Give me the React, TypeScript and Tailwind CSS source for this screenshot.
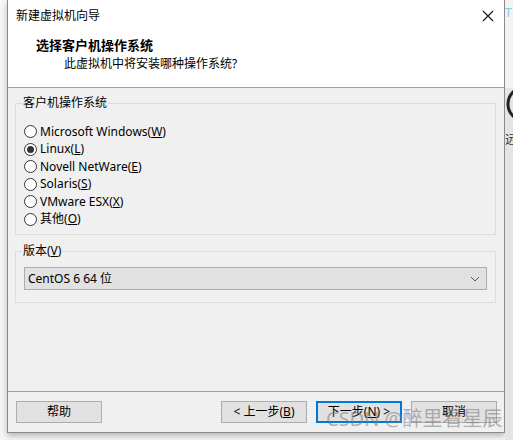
import React from "react";

const font = { fontFamily: '"Noto Sans", "Noto Sans CJK SC", sans-serif' };

const Radio = ({ checked, label, hot, rest = ")" }: { checked?: boolean; label: string; hot: string; rest?: string }) => (
	<div className="flex h-[17.5px] items-center gap-[3px]">
		<span className="flex h-[13px] w-[13px] items-center justify-center rounded-full border border-[#333] bg-white">
			{checked && <span className="h-[7px] w-[7px] rounded-full bg-[#333]" />}
		</span>
		<span>
			{label}(<span className="underline">{hot}</span>{rest}
		</span>
	</div>
);

const Btn = ({ children, focused }: { children: React.ReactNode; focused?: boolean }) => (
	<div
		className={`flex h-[22px] w-[86px] items-center justify-center bg-[#e1e1e1] ${
			focused ? "border-2 border-[#0078d7]" : "border border-[#adadad]"
		}`}
	>
		{children}
	</div>
);

export default function App() {
	return (
		<div className="relative flex h-[440px] w-[513px] overflow-hidden bg-[#f6f6f6] text-[12px] text-black" style={font}>
			<div className="w-[7px]" />
			<div className="flex h-[433px] w-[498px] flex-col border-x border-b border-[#8a8a8a] bg-[#f0f0f0] shadow-[0_3px_6px_rgba(0,0,0,0.25)]">
				{/* title bar + header */}
				<div className="flex h-[87px] flex-col bg-white">
					<div className="flex h-[32px] items-center justify-between pl-[8px] pr-[9px]">
						<span className="leading-none">新建虚拟机向导</span>
						<svg width="12" height="12" viewBox="0 0 12 12" className="mr-[1px]">
							<path d="M1 1 L11 11 M11 1 L1 11" stroke="#111" strokeWidth="1.1" />
						</svg>
					</div>
					<div className="mt-[7px] pl-[28px] text-[13px] font-bold leading-none">选择客户机操作系统</div>
					<div className="mt-[6px] pl-[56px] leading-none">此虚拟机中将安装哪种操作系统?</div>
				</div>
				<div className="h-px bg-[#a0a0a0]" />

				{/* body */}
				<div className="flex flex-1 flex-col px-[7px]">
					<div className="relative mt-[15px] h-[132px] w-[481px] border border-[#dcdcdc]">
						<span className="absolute -top-[9px] left-[6px] bg-[#f0f0f0] px-[1px] leading-[16px]">客户机操作系统</span>
						<div className="flex flex-col pl-[8px] pt-[19px]">
							<Radio label="Microsoft Windows" hot="W" />
							<Radio checked label="Linux" hot="L" />
							<Radio label="Novell NetWare" hot="E" />
							<Radio label="Solaris" hot="S" />
							<Radio label="VMware ESX" hot="X" />
							<Radio label="其他" hot="O" />
						</div>
					</div>

					<div className="relative mt-[16px] h-[52px] w-[481px] border border-[#dcdcdc]">
						<span className="absolute -top-[9px] left-[6px] bg-[#f0f0f0] px-[1px] leading-[16px]">
							版本(<span className="underline">V</span>)
						</span>
						<div className="ml-[8px] mt-[15px] flex h-[23px] w-[463px] items-center justify-between border border-[#adadad] bg-[#e1e1e1] pl-[3px] pr-[6px]">
							<span>CentOS 6 64 位</span>
							<svg width="10" height="6" viewBox="0 0 10 6">
								<path d="M1 1 L5 5 L9 1" fill="none" stroke="#555" strokeWidth="1" />
							</svg>
						</div>
					</div>
				</div>

				{/* footer */}
				<div className="h-px bg-[#a0a0a0]" />
				<div className="flex h-[40px] items-start pl-[8px] pt-[9px]">
					<Btn>帮助</Btn>
					<div className="ml-[119px]">
						<Btn>
							&lt; 上一步(<span className="underline">B</span>)
						</Btn>
					</div>
					<div className="ml-[9px]">
						<Btn focused>
							下一步(<span className="underline">N</span>) &gt;
						</Btn>
					</div>
					<div className="ml-[9px]">
						<Btn>取消</Btn>
					</div>
				</div>
			</div>

			{/* background app peeking on the right */}
			<div className="flex w-[8px] flex-col overflow-hidden bg-[#e4e4e4]">
				<div className="h-[30px] bg-[#f3f3f3] pt-[7px] text-[12px] leading-none text-[#8cc8e0]">T</div>
				<div className="h-[58px] bg-[#f3f3f3]" />
				<svg width="8" height="40" viewBox="0 0 8 40" className="mt-[-4px]">
					<circle cx="20" cy="20" r="17" fill="none" stroke="#222" strokeWidth="3" />
				</svg>
				<div className="mt-[10px] whitespace-nowrap text-[12px] leading-none text-[#333]">远</div>
			</div>

			{/* watermark */}
			<div className="pointer-events-none absolute left-[326px] top-[409px] whitespace-nowrap text-[20px] leading-none text-[rgba(120,120,120,0.55)]">
				CSDN @醉里看星辰
			</div>
		</div>
	);
}
